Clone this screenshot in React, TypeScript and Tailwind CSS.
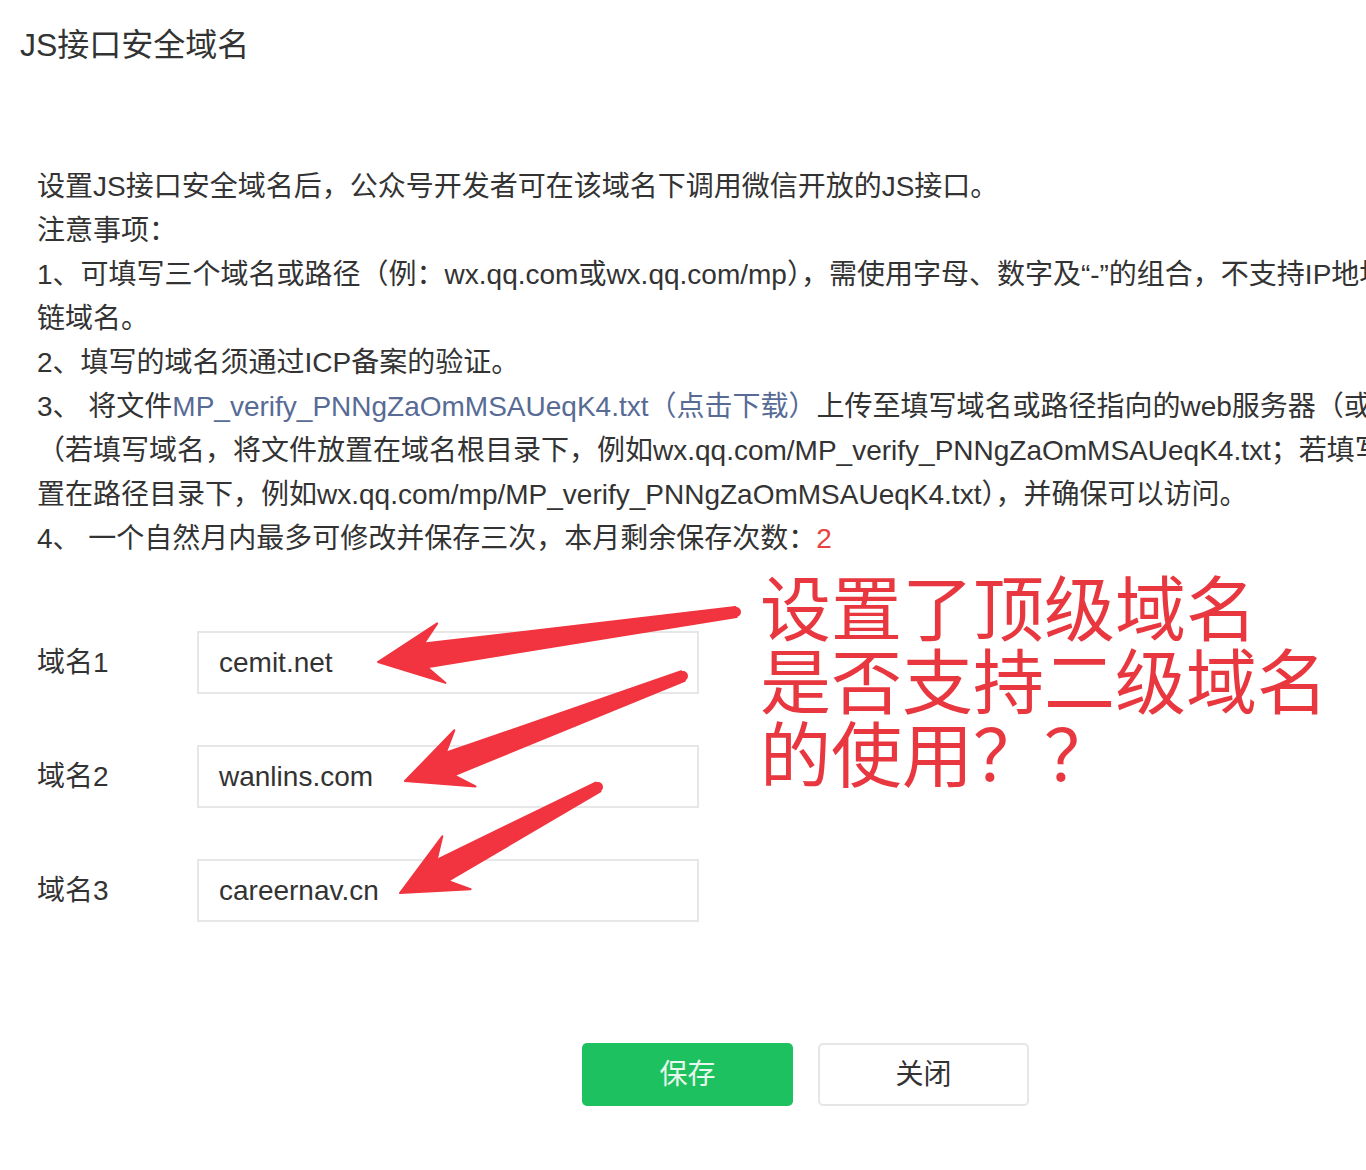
import React from "react";

const font = { fontFamily: '"Liberation Sans", "Noto Sans CJK SC", sans-serif' };

type Pt = [number, number];

// tapered annotation arrow: thin at tail, wide head at tip
function arrowPath(tail: Pt, tip: Pt, headLen = 52, headHalf = 30, w0 = 5, w1 = 12) {
  const dx = tip[0] - tail[0];
  const dy = tip[1] - tail[1];
  const len = Math.hypot(dx, dy);
  const ux = dx / len;
  const uy = dy / len;
  const nx = -uy;
  const ny = ux;
  const bx = tip[0] - ux * headLen;
  const by = tip[1] - uy * headLen;
  const sweep = 12;
  const pts: Pt[] = [
    [tail[0] + nx * w0, tail[1] + ny * w0],
    [bx + ux * 4 + nx * w1, by + uy * 4 + ny * w1],
    [bx - ux * sweep + nx * headHalf, by - uy * sweep + ny * headHalf],
    tip,
    [bx - ux * sweep - nx * headHalf, by - uy * sweep - ny * headHalf],
    [bx + ux * 4 - nx * w1, by + uy * 4 - ny * w1],
    [tail[0] - nx * w0, tail[1] - ny * w0],
  ];
  return "M" + pts.map((p) => `${p[0].toFixed(1)} ${p[1].toFixed(1)}`).join(" L") + " Z";
}

const arrows: { tail: Pt; tip: Pt }[] = [
  { tail: [736, 612], tip: [378, 662] },
  { tail: [683, 676], tip: [405, 781] },
  { tail: [598, 787], tip: [400, 893] },
];

const domains = [
  { label: "域名1", value: "cemit.net" },
  { label: "域名2", value: "wanlins.com" },
  { label: "域名3", value: "careernav.cn" },
];

export default function App() {
  return (
    <div className="relative w-[1366px] h-[1170px] overflow-hidden bg-white text-[#333333]" style={font}>
      {/* Header */}
      <div className="pl-[20px] pt-[25px] h-[165px] text-[32px] leading-[40px]">JS接口安全域名</div>

      {/* Notes */}
      <div className="pl-[37px] text-[28px] leading-[44px] whitespace-nowrap">
        <p>设置JS接口安全域名后，公众号开发者可在该域名下调用微信开放的JS接口。</p>
        <p>注意事项：</p>
        <p>1、可填写三个域名或路径（例：wx.qq.com或wx.qq.com/mp），需使用字母、数字及“-”的组合，不支持IP地址、端口号及短</p>
        <p>链域名。</p>
        <p>2、填写的域名须通过ICP备案的验证。</p>
        <p>
          3、 将文件<span className="text-[#576b95]">MP_verify_PNNgZaOmMSAUeqK4.txt（点击下载）</span>上传至填写域名或路径指向的web服务器（或虚拟主机）的目录
        </p>
        <p>（若填写域名，将文件放置在域名根目录下，例如wx.qq.com/MP_verify_PNNgZaOmMSAUeqK4.txt；若填写路径，将文件放</p>
        <p>置在路径目录下，例如wx.qq.com/mp/MP_verify_PNNgZaOmMSAUeqK4.txt），并确保可以访问。</p>
        <p>
          4、 一个自然月内最多可修改并保存三次，本月剩余保存次数：<span className="text-[#e64340]">2</span>
        </p>
      </div>

      {/* Domain inputs */}
      <div className="mt-[70px] pl-[37px] flex flex-col gap-[51px]">
        {domains.map((d) => (
          <div key={d.label} className="flex items-center">
            <div className="w-[160px] text-[28px]">{d.label}</div>
            <div className="w-[502px] h-[63px] border-2 border-[#e7e7e7] flex items-center pl-[20px] text-[28px]">
              {d.value}
            </div>
          </div>
        ))}
      </div>

      {/* Buttons */}
      <div className="mt-[121px] pl-[582px] flex gap-[25px]">
        <button className="w-[211px] h-[63px] rounded-[5px] bg-[#1ec15f] text-[#e8f8ec] text-[28px]">保存</button>
        <button className="w-[211px] h-[63px] rounded-[5px] border-2 border-[#e6e6e6] bg-white text-[#333333] text-[28px]">关闭</button>
      </div>

      {/* Annotation overlay */}
      <svg className="absolute left-0 top-0" width="1366" height="1170" viewBox="0 0 1366 1170">
        {arrows.map((a, i) => (
          <g key={i} fill="#f1343f">
            <path d={arrowPath(a.tail, a.tip)} strokeLinejoin="round" stroke="#f1343f" strokeWidth="2" />
            <circle cx={a.tail[0]} cy={a.tail[1]} r="5" />
          </g>
        ))}
      </svg>
      <div
        className="absolute left-[760px] top-[568px] text-[71px] leading-[73px] text-[#e8373f]"
        style={{ fontFamily: '"Noto Sans CJK SC", sans-serif' }}
      >
        设置了顶级域名
        <br />
        是否支持二级域名
        <br />
        的使用？？
      </div>
    </div>
  );
}
